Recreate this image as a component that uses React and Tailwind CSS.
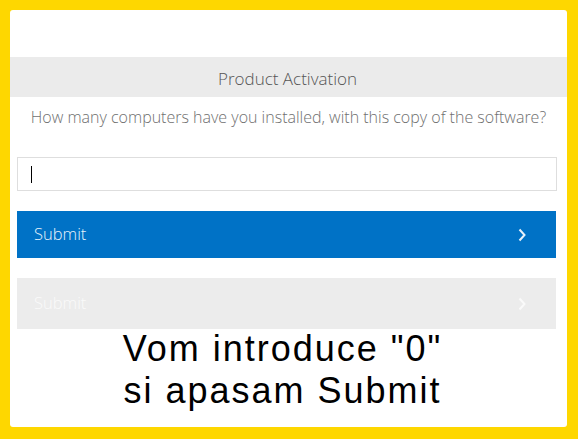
export default function App() {
  return (
    <div className="h-[439px] w-[578px] bg-[#fed700] pb-[12px] pl-[10px] pr-[11px] pt-[10px]">
      <div className="flex h-full flex-col rounded-[3px] bg-white font-['Open_Sans',sans-serif]">
        <div className="h-[47px] shrink-0" />
        <div className="flex h-[40px] shrink-0 items-center justify-center bg-[#ebebeb] pr-[2px] pt-[3px]">
          <span className="text-[17px] font-light text-[#555]">Product Activation</span>
        </div>
        <p className="mt-[8px] text-center text-[16px] font-light leading-[24px] text-[#6f6f6f]">
          How many computers have you installed, with this copy of the software?
        </p>
        <div className="ml-[7px] mr-[10px] mt-[28px] flex h-[34px] items-center border border-[#dedede] bg-white pl-[13px]">
          <span className="h-[17px] w-px bg-black" />
        </div>
        <button className="ml-[7px] mr-[11px] mt-[20px] flex h-[47px] items-center justify-between bg-[#0072c6] pl-[17px] pr-[30px] text-left">
          <span className="text-[16.5px] font-light text-[#e8f2fb]">Submit</span>
          <svg width="8" height="14" viewBox="0 0 8 14" fill="none">
            <path d="M1.5 1.5 L6.5 7 L1.5 12.5" stroke="#e8f2fb" strokeWidth="2" />
          </svg>
        </button>
        <button className="ml-[7px] mr-[11px] mt-[20px] flex h-[51px] items-center justify-between bg-[#ececec] pl-[17px] pr-[30px] text-left">
          <span className="text-[16.5px] font-light text-[#fafafa]">Submit</span>
          <svg width="8" height="14" viewBox="0 0 8 14" fill="none">
            <path d="M1.5 1.5 L6.5 7 L1.5 12.5" stroke="#fafafa" strokeWidth="2" />
          </svg>
        </button>
        <div className="-mt-[1px] pr-[12px] text-center font-['Liberation_Sans',Arial,sans-serif] text-[36px] leading-[42px] tracking-[2px] text-black">
          <div>Vom introduce "0"</div>
          <div>si apasam Submit</div>
        </div>
      </div>
    </div>
  );
}
